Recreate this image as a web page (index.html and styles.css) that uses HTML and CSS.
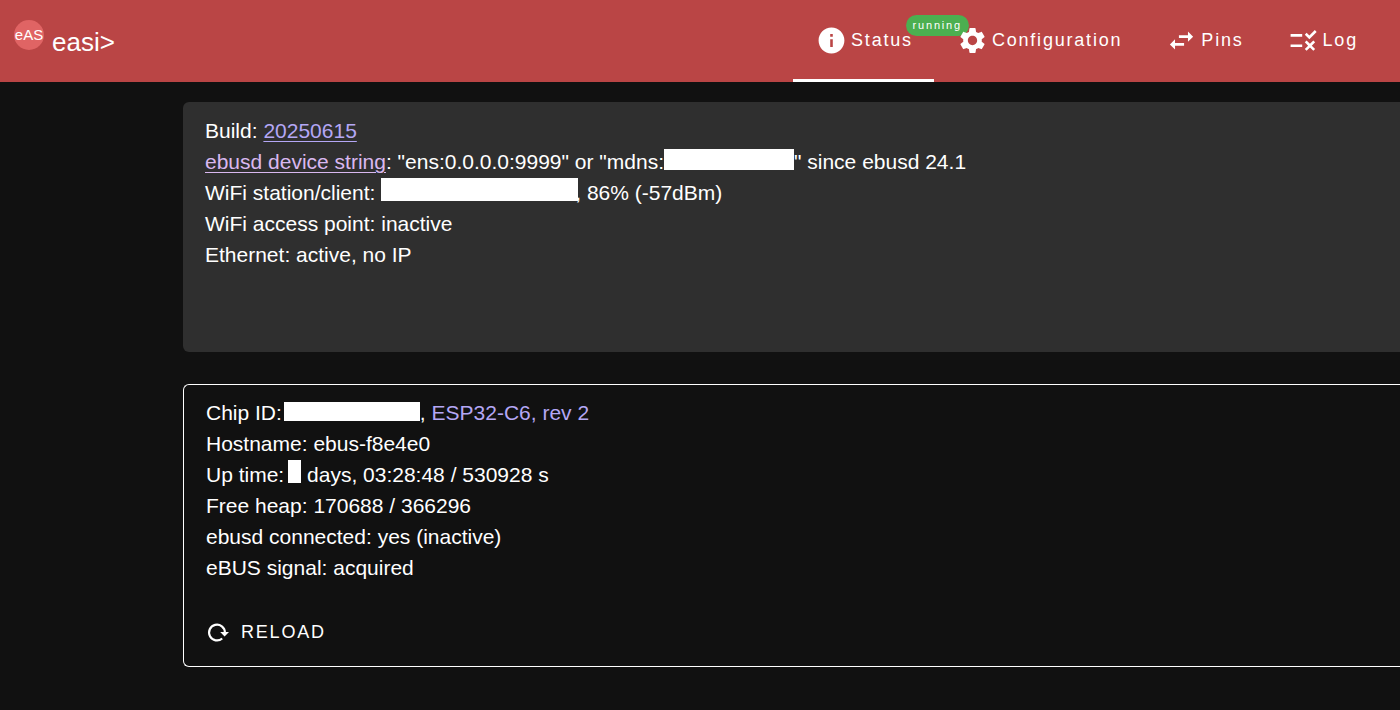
FILE: index.html
```html
<!DOCTYPE html>
<html lang="en">
<head>
<meta charset="utf-8">
<title>easi&gt;</title>
<link rel="stylesheet" href="styles.css">
</head>
<body>
<header class="topbar">
  <div class="brand">
    <span class="logo">eAS</span>
    <span class="name">easi&gt;</span>
  </div>
  <nav class="tabs" aria-label="Main">
    <button class="tab active" type="button">
      <svg class="icon" viewBox="0 0 24 24"><path d="M12 2C6.480 2 2 6.480 2 12s4.480 10 10 10 10-4.480 10-10S17.520 2 12 2zm1 15h-2v-6h2v6zm0-8h-2V7h2v2z"/></svg>
      Status
      <span class="badge">running</span>
    </button>
    <button class="tab" type="button">
      <svg class="icon" viewBox="0 0 24 24"><path d="M19.140 12.940c.04-.3.060-.61.060-.94 0-.32-.02-.64-.07-.94l2.030-1.580c.18-.14.230-.41.120-.61l-1.920-3.320c-.12-.22-.37-.29-.59-.22l-2.390.96c-.5-.38-1.030-.7-1.620-.94l-.36-2.540c-.04-.24-.24-.41-.48-.41h-3.840c-.24 0-.43.170-.47.410l-.36 2.540c-.59.240-1.130.570-1.620.940l-2.390-.96c-.22-.08-.47 0-.59.220L2.740 8.870c-.12.210-.08.470.120.610l2.030 1.580c-.05.3-.09.630-.09.940s.02.640.070.940l-2.030 1.580c-.18.140-.23.410-.12.610l1.920 3.320c.12.220.370.290.590.220l2.390-.96c.5.380 1.030.7 1.620.940l.36 2.540c.05.240.240.410.480.410h3.840c.24 0 .44-.17.470-.41l.36-2.540c.59-.24 1.130-.56 1.620-.94l2.390.960c.22.080.470 0 .59-.22l1.920-3.320c.12-.22.070-.47-.12-.61l-2.010-1.580zM12 15.600c-1.980 0-3.600-1.620-3.600-3.600s1.620-3.600 3.600-3.600 3.600 1.620 3.600 3.600-1.620 3.600-3.600 3.600z"/></svg>
      Configuration
    </button>
    <button class="tab" type="button">
      <svg class="icon" viewBox="0 0 24 24"><path d="M6.990 11L3 15l3.990 4v-3H14v-2H6.990v-3zM21 9l-3.990-4v3H10v2h7.010v3L21 9z"/></svg>
      Pins
    </button>
    <button class="tab" type="button">
      <svg class="icon" viewBox="0 0 24 24"><path d="M16.540 11L13 7.460l1.410-1.410 2.120 2.120 4.240-4.240 1.410 1.410L16.540 11zM11 7H2v2h9V7zm10 6.410L19.590 12 17 14.590 14.410 12 13 13.410 15.590 16 13 18.590 14.410 20 17 17.410 19.590 20 21 18.590 18.410 16 21 13.410zM11 15H2v2h9v-2z"/></svg>
      Log
    </button>
  </nav>
</header>
<main class="content">
  <section class="card filled">
    <div>Build: <a class="link" href="#build">20250615</a></div>
    <div><a class="link visited" href="#device">ebusd device string</a>: "ens:0.0.0.0:9999" or "mdns:<span class="mask mask-host"></span>" since ebusd 24.1</div>
    <div>WiFi station/client: <span class="mask mask-wifi"></span>, 86% (-57dBm)</div>
    <div>WiFi access point: inactive</div>
    <div>Ethernet: active, no IP</div>
  </section>
  <section class="card outlined">
    <div>Chip ID:<span class="mask mask-chip"></span>, <span class="chip">ESP32-C6, rev 2</span></div>
    <div>Hostname: ebus-f8e4e0</div>
    <div>Up time:<span class="mask mask-days"></span> days, 03:28:48 / 530928 s</div>
    <div>Free heap: 170688 / 366296</div>
    <div>ebusd connected: yes (inactive)</div>
    <div>eBUS signal: acquired</div>
    <button class="reload" type="button">
      <svg class="reload-icon" viewBox="0 0 24 24"><path d="M16.200 17.500A7.900 7.900 0 1 1 18.900 11.500" fill="none" stroke="currentColor" stroke-width="2.200"/><path d="M14.200 11h8.800l-4.400 4.600z"/></svg>
      RELOAD
    </button>
  </section>
</main>
</body>
</html>
```
FILE: styles.css
```css
* {
  box-sizing: border-box;
}

body {
  margin: 0;
  min-height: 100vh;
  overflow-x: hidden;
  background: #111;
  color: #fff;
  font-family: "Liberation Sans", Arial, sans-serif;
  font-size: 21px;
  line-height: 31px;
}

button {
  border: 0;
  background: none;
  color: inherit;
  font: inherit;
  cursor: pointer;
}

svg {
  fill: currentColor;
}

.topbar {
  display: flex;
  justify-content: space-between;
  height: 82px;
  padding: 0 21px 0 14px;
  background: #ba4545;
}

.brand {
  display: flex;
  align-items: center;
  gap: 8px;
}

.logo {
  width: 30px;
  height: 30px;
  margin-bottom: 12px;
  border-radius: 50%;
  background: #e06464;
  font-size: 15px;
  line-height: 30px;
  text-align: center;
}

.name {
  padding-top: 2px;
  font-size: 26px;
}

.tabs {
  display: flex;
}

.tab {
  position: relative;
  display: flex;
  align-items: center;
  gap: 4px;
  padding: 0 21px 2px 23px;
  font-size: 18px;
  letter-spacing: 0.1em;
}

.tab.active {
  box-shadow: inset 0 -3px #fff;
}

.icon {
  position: relative;
  width: 31px;
  height: 31px;
}

.badge {
  position: absolute;
  top: 15px;
  right: -35px;
  padding: 0 7px;
  border-radius: 11px;
  background: #4caf50;
  font-size: 11px;
  line-height: 21px;
}

.content {
  display: grid;
  gap: 32px;
  padding: 20px 0 43px 183px;
}

.card {
  padding: 13px 22px;
  border-radius: 6px 0 0 6px;
}

.filled {
  min-height: 250px;
  background: #2f2f2f;
}

.outlined {
  border: 1px solid #fff;
  border-right: 0;
  padding: 12px 22px 18px;
}

.link,
.chip {
  color: #b4a7f5;
}

.visited {
  color: #d9b8f0;
}

.link {
  text-decoration-thickness: 1px;
  text-underline-offset: 3px;
}

.mask {
  position: relative;
  display: inline-block;
  vertical-align: -1px;
  background: #fff;
}

.mask-host {
  width: 130px;
  height: 21px;
}

.mask-wifi {
  width: 197px;
  height: 23px;
  margin-right: -3px;
}

.mask-chip {
  width: 136px;
  height: 19px;
  margin-left: 2px;
}

.mask-days {
  width: 13px;
  height: 23px;
  margin-left: 4px;
}

.reload {
  display: flex;
  align-items: center;
  gap: 11px;
  margin-top: 34px;
  padding: 0;
  font-size: 18px;
  letter-spacing: 0.1em;
}

.reload-icon {
  width: 24px;
  height: 24px;
}
```
